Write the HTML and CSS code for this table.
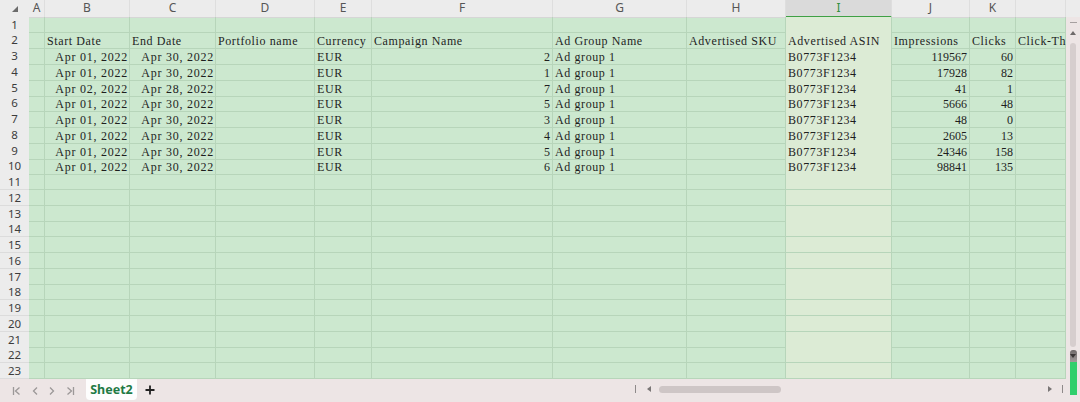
FILE: index.html
```html
<!DOCTYPE html>
<html>
<head>
<meta charset="utf-8">
<title>Sheet2</title>
<link rel="stylesheet" href="styles.css">
</head>
<body>
<div class="app">
  <div class="main">
    <div class="sheet">
      <div class="row hdr">
        <span class="corner"><svg width="6" height="6" viewBox="0 0 6 6"><polygon points="6,0 6,6 0,6" fill="#6b6b6b"/></svg></span>
        <span>A</span><span>B</span><span>C</span><span>D</span><span>E</span><span>F</span><span>G</span><span>H</span><span>I</span><span>J</span><span>K</span><span></span>
      </div>
      <div class="row"><span class="rn">1</span><span></span><span></span><span></span><span></span><span></span><span></span><span></span><span></span><span></span><span></span><span></span><span></span></div>
      <div class="row"><span class="rn">2</span><span></span><span class="t">Start Date</span><span class="t">End Date</span><span class="t">Portfolio name</span><span class="t">Currency</span><span class="t">Campaign Name</span><span class="t">Ad Group Name</span><span class="t">Advertised SKU</span><span class="t">Advertised ASIN</span><span class="t">Impressions</span><span class="t">Clicks</span><span class="t">Click-Th</span></div>
      <div class="row"><span class="rn">3</span><span></span><span class="d">Apr 01, 2022</span><span class="d">Apr 30, 2022</span><span></span><span class="t">EUR</span><span class="n">2</span><span class="t">Ad group 1</span><span></span><span class="t">B0773F1234</span><span class="n">119567</span><span class="n">60</span><span></span></div>
      <div class="row"><span class="rn">4</span><span></span><span class="d">Apr 01, 2022</span><span class="d">Apr 30, 2022</span><span></span><span class="t">EUR</span><span class="n">1</span><span class="t">Ad group 1</span><span></span><span class="t">B0773F1234</span><span class="n">17928</span><span class="n">82</span><span></span></div>
      <div class="row"><span class="rn">5</span><span></span><span class="d">Apr 02, 2022</span><span class="d">Apr 28, 2022</span><span></span><span class="t">EUR</span><span class="n">7</span><span class="t">Ad group 1</span><span></span><span class="t">B0773F1234</span><span class="n">41</span><span class="n">1</span><span></span></div>
      <div class="row"><span class="rn">6</span><span></span><span class="d">Apr 01, 2022</span><span class="d">Apr 30, 2022</span><span></span><span class="t">EUR</span><span class="n">5</span><span class="t">Ad group 1</span><span></span><span class="t">B0773F1234</span><span class="n">5666</span><span class="n">48</span><span></span></div>
      <div class="row"><span class="rn">7</span><span></span><span class="d">Apr 01, 2022</span><span class="d">Apr 30, 2022</span><span></span><span class="t">EUR</span><span class="n">3</span><span class="t">Ad group 1</span><span></span><span class="t">B0773F1234</span><span class="n">48</span><span class="n">0</span><span></span></div>
      <div class="row"><span class="rn">8</span><span></span><span class="d">Apr 01, 2022</span><span class="d">Apr 30, 2022</span><span></span><span class="t">EUR</span><span class="n">4</span><span class="t">Ad group 1</span><span></span><span class="t">B0773F1234</span><span class="n">2605</span><span class="n">13</span><span></span></div>
      <div class="row"><span class="rn">9</span><span></span><span class="d">Apr 01, 2022</span><span class="d">Apr 30, 2022</span><span></span><span class="t">EUR</span><span class="n">5</span><span class="t">Ad group 1</span><span></span><span class="t">B0773F1234</span><span class="n">24346</span><span class="n">158</span><span></span></div>
      <div class="row"><span class="rn">10</span><span></span><span class="d">Apr 01, 2022</span><span class="d">Apr 30, 2022</span><span></span><span class="t">EUR</span><span class="n">6</span><span class="t">Ad group 1</span><span></span><span class="t">B0773F1234</span><span class="n">98841</span><span class="n">135</span><span></span></div>
      <div class="row"><span class="rn">11</span><span></span><span></span><span></span><span></span><span></span><span></span><span></span><span></span><span></span><span></span><span></span><span></span></div>
      <div class="row"><span class="rn">12</span><span></span><span></span><span></span><span></span><span></span><span></span><span></span><span></span><span></span><span></span><span></span><span></span></div>
      <div class="row"><span class="rn">13</span><span></span><span></span><span></span><span></span><span></span><span></span><span></span><span></span><span></span><span></span><span></span><span></span></div>
      <div class="row"><span class="rn">14</span><span></span><span></span><span></span><span></span><span></span><span></span><span></span><span></span><span></span><span></span><span></span><span></span></div>
      <div class="row"><span class="rn">15</span><span></span><span></span><span></span><span></span><span></span><span></span><span></span><span></span><span></span><span></span><span></span><span></span></div>
      <div class="row"><span class="rn">16</span><span></span><span></span><span></span><span></span><span></span><span></span><span></span><span></span><span></span><span></span><span></span><span></span></div>
      <div class="row"><span class="rn">17</span><span></span><span></span><span></span><span></span><span></span><span></span><span></span><span></span><span></span><span></span><span></span><span></span></div>
      <div class="row"><span class="rn">18</span><span></span><span></span><span></span><span></span><span></span><span></span><span></span><span></span><span></span><span></span><span></span><span></span></div>
      <div class="row"><span class="rn">19</span><span></span><span></span><span></span><span></span><span></span><span></span><span></span><span></span><span></span><span></span><span></span><span></span></div>
      <div class="row"><span class="rn">20</span><span></span><span></span><span></span><span></span><span></span><span></span><span></span><span></span><span></span><span></span><span></span><span></span></div>
      <div class="row"><span class="rn">21</span><span></span><span></span><span></span><span></span><span></span><span></span><span></span><span></span><span></span><span></span><span></span><span></span></div>
      <div class="row"><span class="rn">22</span><span></span><span></span><span></span><span></span><span></span><span></span><span></span><span></span><span></span><span></span><span></span><span></span></div>
      <div class="row"><span class="rn">23</span><span></span><span></span><span></span><span></span><span></span><span></span><span></span><span></span><span></span><span></span><span></span><span></span></div>
    </div>
    <div class="bar">
      <div class="tabs">
        <div class="nav">
          <svg width="9" height="10" viewBox="0 0 9 10"><path d="M1.5 1v8M7.5 1.5L3.5 5l4 3.5" fill="none" stroke="#9c9898" stroke-width="1.3"/></svg>
          <svg width="6" height="10" viewBox="0 0 6 10"><path d="M5 1.5L1.5 5L5 8.5" fill="none" stroke="#9c9898" stroke-width="1.3"/></svg>
          <svg width="6" height="10" viewBox="0 0 6 10"><path d="M1 1.5L4.5 5L1 8.5" fill="none" stroke="#9c9898" stroke-width="1.3"/></svg>
          <svg width="9" height="10" viewBox="0 0 9 10"><path d="M1.5 1.5L5.5 5l-4 3.5M7.5 1v8" fill="none" stroke="#9c9898" stroke-width="1.3"/></svg>
        </div>
        <div class="tab">Sheet2</div>
        <svg class="plus" width="10" height="10" viewBox="0 0 10 10"><path d="M5 0.5v9M0.5 5h9" stroke="#222" stroke-width="1.8"/></svg>
      </div>
      <div class="hscroll">
        <span class="tick"></span>
        <svg class="arr" width="4" height="6" viewBox="0 0 4 6"><polygon points="4,0 4,6 0,3" fill="#7a7676"/></svg>
        <div class="track"><div class="thumb"></div></div>
        <svg class="arr" width="4" height="6" viewBox="0 0 4 6"><polygon points="0,0 4,3 0,6" fill="#7a7676"/></svg>
        <span class="tick end"></span>
      </div>
    </div>
  </div>
  <div class="vscroll">
    <div class="vtop"></div>
    <div class="dash"></div>
    <svg class="up" width="6" height="4" viewBox="0 0 6 4"><polygon points="3,0 6,4 0,4" fill="#6e6a6a"/></svg>
    <div class="vthumb"></div>
    <div class="vdark"><svg width="6" height="4" viewBox="0 0 6 4"><polygon points="0,0 6,0 3,4" fill="#3a3636"/></svg></div>
    <div class="vgreen"></div>
  </div>
</div>
</body>
</html>
```
FILE: styles.css
```css
* {
  box-sizing: border-box;
  margin: 0;
  padding: 0;
}

html, body {
  width: 1080px;
  height: 402px;
  overflow: hidden;
}

body {
  background: #ede5e5;
  font-family: "Liberation Serif", serif;
  color: #1e1e1e;
}

.app {
  display: flex;
  height: 402px;
}

.main {
  width: 1066px;
  display: flex;
  flex-direction: column;
}

.sheet {
  height: 378.75px;
  overflow: hidden;
  background: #cce8cf;
}

.row {
  display: grid;
  grid-template-columns: 29px 16px 85px 86px 99px 57px 181px 134px 99px 106px 78px 46px 50px;
  height: 15.75px;
}

.row > span {
  border-right: 1px solid #b7d5ba;
  border-bottom: 1px solid #b7d5ba;
  font-size: 12px;
  line-height: 13px;
  padding: 3.1px 2px 0 2px;
  white-space: nowrap;
}

.row > .t {
  letter-spacing: 0.6px;
}

.row > .d {
  letter-spacing: 0.75px;
  text-align: right;
  padding-right: 1px;
}

.row > .n {
  text-align: right;
  padding-right: 2px;
}

.row:not(.hdr) > span:nth-child(10) {
  background: #dcebd5;
}

.row > .rn {
  background: #ececec;
  border-right: none;
  border-bottom: 1px solid #dcdcdc;
  font-family: "Noto Sans", sans-serif;
  font-size: 11.5px;
  color: #3c3c3c;
  text-align: center;
  padding: 0;
  line-height: 15px;
}

.hdr {
  height: 16.5px;
  background: #ececec;
}

.hdr > span {
  border-right: 1px solid #dedede;
  border-bottom: 1px solid #d6d6d6;
  font-family: "Noto Sans", sans-serif;
  font-size: 12px;
  color: #555;
  text-align: center;
  line-height: 15.5px;
  padding: 0;
}

.hdr > .corner {
  display: flex;
  align-items: center;
  justify-content: center;
  border-right: none;
  padding-top: 1px;
}

.hdr > span:nth-child(10) {
  background: #dadada;
  color: #2f8f3f;
  border-bottom: 2px solid #3fa045;
}

.bar {
  flex: 1;
  display: flex;
  align-items: flex-start;
  background: #ede5e5;
}

.tabs {
  width: 633px;
  display: flex;
  align-items: flex-start;
}

.nav {
  display: flex;
  align-items: center;
  gap: 11px;
  padding-left: 12px;
  margin-top: 7px;
  width: 86px;
}

.tab {
  width: 51px;
  height: 21px;
  margin-top: 0.5px;
  background: #fdfdfd;
  border-radius: 0 0 4px 4px;
  font-family: "Noto Sans", sans-serif;
  font-weight: 700;
  font-size: 12.5px;
  color: #1f7a45;
  text-align: center;
  line-height: 21px;
}

.plus {
  margin-left: 8px;
  margin-top: 6.5px;
}

.hscroll {
  flex: 1;
  display: flex;
  align-items: center;
  height: 23px;
  padding: 0 3px 2px 2px;
}

.tick {
  width: 1px;
  height: 8px;
  background: #8e8a8a;
}

.hscroll .arr {
  margin-left: 11px;
}

.track {
  flex: 1;
  margin: 0 0 0 8px;
}

.thumb {
  width: 122px;
  height: 7px;
  border-radius: 4px;
  background: #cec6c6;
}

.hscroll .arr + .tick {
  margin-left: 10px;
}

.track + .arr {
  margin-left: 0;
  margin-right: 0;
}

.vscroll {
  width: 14px;
  display: flex;
  flex-direction: column;
  align-items: center;
  background: #ede5e5;
}

.vtop {
  width: 100%;
  height: 16.5px;
  background: #ececec;
}

.dash {
  width: 7px;
  height: 1px;
  margin-top: 5.5px;
  background: #a6a0a0;
}

.up {
  margin-top: 8px;
}

.vthumb {
  width: 6px;
  height: 304px;
  margin-top: 8px;
  border-radius: 3px;
  background: #d6cece;
}

.vdark {
  width: 7px;
  height: 12px;
  margin-top: 3px;
  border-radius: 3px 3px 0 0;
  background: linear-gradient(#6f6a6a, #a19b9b);
  display: flex;
  justify-content: center;
  align-items: center;
}

.vgreen {
  width: 7px;
  height: 33px;
  background: #2fcf6c;
}
```
